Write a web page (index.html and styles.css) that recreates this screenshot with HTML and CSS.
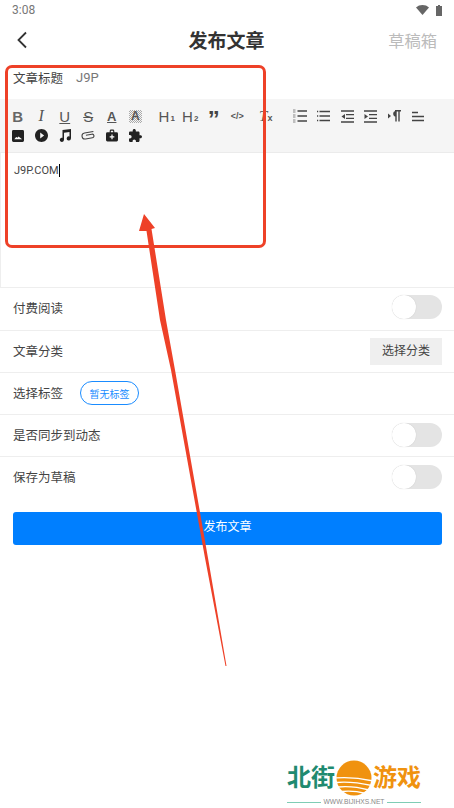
FILE: index.html
```html
<!DOCTYPE html>
<html lang="zh">
<head>
  <meta charset="UTF-8">
  <meta name="viewport" content="width=device-width, initial-scale=1.0">
  <title>发布文章</title>
  <link rel="stylesheet" href="styles.css">
</head>
<body>
  <div class="page">
    <!-- Status bar -->
    <div class="status-bar">
      <span>3:08</span>
      <div class="status-icons">
        <svg width="13" height="10" viewBox="0 0 13 10"><path d="M0 2.500C3.500-.8 9.500-.8 13 2.500L6.500 10z" fill="#666"/></svg>
        <svg width="6" height="11" viewBox="0 0 6 11"><path d="M2 0h2v1h2v10H0V1h2z" fill="#666"/></svg>
      </div>
    </div>

    <!-- Header -->
    <div class="header">
      <svg class="back" width="12" height="18" viewBox="0 0 12 18"><path d="M10 1.500L2.500 9l7.500 7.500" fill="none" stroke="#333" stroke-width="1.800"/></svg>
      <h1>发布文章</h1>
      <span class="drafts">草稿箱</span>
    </div>

    <div class="title-row">
      <span>文章标题</span>
      <span class="title-value">J9P</span>
    </div>

    <!-- Editor toolbar -->
    <div class="toolbar">
      <div class="tool-group">
        <span class="tool t-bold">B</span>
        <span class="tool t-italic">I</span>
        <span class="tool t-under">U</span>
        <span class="tool t-strike">S</span>
        <span class="tool t-color">A</span>
        <span class="tool"><span class="t-back">A</span></span>
      </div>
      <div class="tool-group">
        <span class="tool t-head">H<sub>1</sub></span>
        <span class="tool t-head">H<sub>2</sub></span>
        <span class="tool t-quote">”</span>
        <span class="tool t-code">&lt;/&gt;</span>
      </div>
      <div class="tool-group t-clear-group">
        <span class="tool t-clear">T<sub>x</sub></span>
      </div>
      <div class="tool-group">
        <span class="tool"><svg width="14" height="14" viewBox="0 0 14 14"><path d="M4.500 2h9.500M4.500 7h9.500M4.500 12h9.500" stroke="#444" stroke-width="1.300"/><path d="M0 1h2.500M0 3h2.500M0 6h2.500M0 8h2.500M0 11h2.500M0 13h2.500" stroke="#888"/></svg></span>
        <span class="tool"><svg width="13" height="12" viewBox="0 0 13 12"><path d="M2.500 1.500H13M2.500 6H13M2.500 10.500H13M0 1.500h1.200M0 6h1.200M0 10.500h1.200" stroke="#444" stroke-width="1.300"/></svg></span>
        <span class="tool"><svg width="13" height="13" viewBox="0 0 13 13"><path d="M0 1h13M5 4.700h8M5 8.300h8M0 12h13" stroke="#444" stroke-width="1.300"/><path d="M4 4v5L.5 6.500z" fill="#444"/></svg></span>
        <span class="tool"><svg width="13" height="13" viewBox="0 0 13 13"><path d="M0 1h13M5 4.700h8M5 8.300h8M0 12h13" stroke="#444" stroke-width="1.300"/><path d="M.5 4v5L4 6.500z" fill="#444"/></svg></span>
        <span class="tool"><svg width="13" height="12" viewBox="0 0 13 12"><path d="M0 3.500v5L3 6z" fill="#444"/><path d="M8 1a2.800 2.800 0 0 0 0 5.600z" fill="#444"/><path d="M8 1v10.500M11 1v10.500M7 .8h6" stroke="#444" stroke-width="1.400"/></svg></span>
        <span class="tool"><svg width="12" height="11" viewBox="0 0 12 11"><path d="M0 1.500h6M0 5.500h12M0 9.500h12" stroke="#444" stroke-width="1.300"/></svg></span>
      </div>
      <div class="tool-group">
        <span class="tool"><svg width="12" height="12" viewBox="0 0 13 13"><path d="M1.500 0h10A1.500 1.500 0 0 1 13 1.500v10a1.500 1.500 0 0 1-1.500 1.500h-10A1.500 1.500 0 0 1 0 11.500v-10A1.500 1.500 0 0 1 1.500 0z" fill="#222"/><path d="M2.500 10l2-2.500 1.500 1 1-1.500 1.500 1 2.500 2z" fill="#fff"/></svg></span>
        <span class="tool"><svg width="13" height="13" viewBox="2 2 20 20"><path d="M12 2C6.480 2 2 6.480 2 12s4.480 10 10 10 10-4.480 10-10S17.520 2 12 2zm-2 14.500v-9l6 4.500-6 4.500z" fill="#222"/></svg></span>
        <span class="tool"><svg width="12" height="13" viewBox="0 0 12 13"><path d="M3.500 1L12 0v9.500h-.1a2.100 2.100 0 1 1-1.400-2V3L5 3.700v7.100a2.100 2.100 0 1 1-1.500-2z" fill="#222"/></svg></span>
        <span class="tool"><svg width="14" height="9" viewBox="0 0 14 9"><g transform="rotate(-10 7 4.500)"><path d="M13 1.500H4a3 3 0 0 0 0 6h7a1.800 1.800 0 0 0 0-3.600H5" fill="none" stroke="#444" stroke-width="1.100"/></g></svg></span>
        <span class="tool"><svg width="12" height="13" viewBox="0 0 13 13"><path d="M4 3V1.500A1.500 1.500 0 0 1 5.500 0h2A1.500 1.500 0 0 1 9 1.500V3h2.500A1.500 1.500 0 0 1 13 4.500v7a1.500 1.500 0 0 1-1.500 1.500h-10A1.500 1.500 0 0 1 0 11.500v-7A1.500 1.500 0 0 1 1.500 3zm1.200 0h2.600V1.300H5.200z" fill="#222" fill-rule="evenodd"/><path d="M6.500 5.500v5M4 8h5" stroke="#fff" stroke-width="1.300"/></svg></span>
        <span class="tool"><svg width="13" height="13" viewBox="2 1 21 21"><path d="M20.500 11H19V7c0-1.100-.9-2-2-2h-4V3.500C13 2.120 11.880 1 10.500 1S8 2.120 8 3.500V5H4c-1.100 0-1.990.9-1.990 2v3.800H3.500c1.490 0 2.700 1.210 2.700 2.700s-1.210 2.700-2.700 2.700H2V20c0 1.100.9 2 2 2h3.800v-1.500c0-1.490 1.210-2.700 2.700-2.700 1.490 0 2.700 1.210 2.700 2.700V22H17c1.100 0 2-.9 2-2v-4h1.500c1.380 0 2.500-1.120 2.500-2.500S21.880 11 20.500 11z" fill="#222"/></svg></span>
      </div>
    </div>

    <div class="editor">
      <span class="editor-text">J9P.COM</span>
    </div>

    <!-- Settings rows -->
    <div class="row row-first">
      <span class="label">付费阅读</span>
      <div class="switch"><div class="knob"></div></div>
    </div>
    <div class="row">
      <span class="label">文章分类</span>
      <div class="pick-btn">选择分类</div>
    </div>
    <div class="row row-start">
      <span class="label">选择标签</span>
      <div class="chip">暂无标签</div>
    </div>
    <div class="row">
      <span class="label">是否同步到动态</span>
      <div class="switch"><div class="knob"></div></div>
    </div>
    <div class="row">
      <span class="label">保存为草稿</span>
      <div class="switch"><div class="knob"></div></div>
    </div>

    <div class="submit">发布文章</div>

    <!-- Annotation drawn over the screenshot -->
    <div class="mark-box"></div>
    <svg class="mark-arrow" width="454" height="808" viewBox="0 0 454 808">
      <path d="M144 214L155 228 151.500 229 166 320 175 370 208 558 226.500 666 225.500 666 205 558 171 370 160 320 146.500 231 139 231z" fill="#ee4128"/>
    </svg>

    <!-- Watermark -->
    <div class="watermark">
      <div class="wm-main">
        <span class="wm-green">北街</span>
        <svg width="36" height="36" viewBox="0 0 36 36">
          <circle cx="18" cy="18" r="17.500" fill="#f0920f"/>
          <path d="M-1 18c12-1 25 0 38 3M0 22.500c10-1 22 0 36 3M2 27c10-1 20 0 31 3M6 31.500c8-1 16 0 24 2" fill="none" stroke="#fff" stroke-width="1.400"/>
        </svg>
        <span class="wm-orange">游戏</span>
      </div>
      <div class="wm-sub">
        <i></i><span>WWW.BIJIHXS.NET</span><i></i>
      </div>
    </div>
  </div>
</body>
</html>
```

FILE: styles.css
```css
/* General Styles */
body {
  margin: 0;
  background: #fff;
  font-family: "Roboto", "Noto Sans CJK SC", sans-serif;
  color: #444;
}

.page {
  position: relative;
  width: 454px;
  height: 808px;
  overflow: hidden;
  font-size: 12.500px;
}

/* Status bar */
.status-bar {
  display: flex;
  justify-content: space-between;
  align-items: center;
  height: 20px;
  padding: 0 12px;
  font-size: 12px;
  color: #777;
}

.status-icons {
  display: flex;
  align-items: center;
  gap: 7px;
}

/* Header */
.header {
  display: grid;
  grid-template-columns: 1fr auto 1fr;
  align-items: center;
  box-sizing: border-box;
  height: 42px;
  padding: 0 17px 2px 16px;
}

.header h1 {
  margin: 0 0 2px;
  font-size: 19px;
  font-weight: 700;
  color: #333;
}

.drafts {
  justify-self: end;
  font-size: 16.300px;
  color: #bbb;
}

/* Title row */
.title-row {
  display: flex;
  gap: 13px;
  align-items: center;
  height: 37px;
  padding: 0 13px 7px;
  box-sizing: border-box;
}

.title-value {
  color: #777;
  font-size: 13px;
}

/* Toolbar */
.toolbar {
  display: flex;
  flex-wrap: wrap;
  align-content: flex-start;
  box-sizing: border-box;
  height: 54px;
  padding: 7.500px 0 0 6px;
  background: #f5f5f5;
  border-bottom: 1px solid #ebebeb;
}

.tool-group {
  display: flex;
  margin-right: 8px;
}

.t-clear-group {
  margin-left: -3px;
  margin-right: 11px;
}

.tool {
  display: flex;
  align-items: center;
  justify-content: center;
  width: 23.500px;
  height: 19.500px;
  font-family: "Liberation Sans", sans-serif;
  font-size: 15px;
  color: #555;
}

.tool sub {
  font-size: 8px;
  font-weight: 700;
  line-height: 1;
  align-self: flex-end;
  margin: 0 0 3px 1px;
  vertical-align: baseline;
}

.t-bold { font-size: 15px; font-weight: 700; color: #666; }
.t-italic { font-family: "Liberation Serif", serif; font-style: italic; font-size: 16px; }
.t-under { font-size: 15px; text-decoration: underline; }
.t-strike { font-size: 15px; text-decoration: line-through; }
.t-color { font-size: 13px; font-weight: 700; text-decoration: underline; }

.t-back {
  width: 13px;
  height: 13px;
  line-height: 13px;
  text-align: center;
  font-size: 12px;
  font-weight: 700;
  background: repeating-conic-gradient(#aaa 0 25%, #f5f5f5 0 50%) 0 0 / 2px 2px;
}

.t-head { font-size: 15px; }
.t-quote { font-size: 24px; font-weight: 700; padding-top: 8px; box-sizing: border-box; color: #444; }
.t-code { font-size: 9px; font-weight: 700; }
.t-clear { font-family: "Liberation Serif", serif; font-style: italic; font-size: 15px; }
.t-clear sub { font-family: "Liberation Sans", sans-serif; font-style: normal; font-size: 9px; margin: 0 0 3px 0; }

/* Editor */
.editor {
  box-sizing: border-box;
  height: 134px;
  padding: 11px 13px;
  border-left: 1px solid #eee;
  font-size: 11px;
  line-height: 13px;
  color: #444;
}

.editor-text {
  border-right: 1px solid #000;
  display: inline-block;
}

/* Rows */
.row {
  display: flex;
  align-items: center;
  justify-content: space-between;
  box-sizing: border-box;
  height: 42px;
  padding: 0 12px 1px 13px;
  border-top: 1px solid #eee;
}

.label {
  margin-bottom: 2px;
}

.row-first {
  height: 43px;
  padding-bottom: 2px;
}

.row-first .switch {
  margin-bottom: 2px;
}

.row:last-of-type {
  border-bottom: 1px solid #eee;
  height: 43px;
}

.row-start {
  justify-content: flex-start;
  gap: 17px;
}

.switch {
  display: flex;
  width: 50px;
  height: 24px;
  border-radius: 12px;
  background: #e4e4e4;
}

.knob {
  width: 24px;
  height: 24px;
  border-radius: 50%;
  background: #fff;
  box-shadow: 0 0 1px rgba(0, 0, 0, 0.2);
}

.pick-btn {
  width: 72px;
  height: 27px;
  line-height: 27px;
  text-align: center;
  background: #efefef;
  font-size: 12px;
}

.chip {
  display: flex;
  align-items: center;
  justify-content: center;
  box-sizing: border-box;
  width: 59px;
  height: 24px;
  border: 1px solid #1a8cff;
  border-radius: 12px;
  color: #1a8cff;
  font-size: 10px;
}

/* Submit button */
.submit {
  margin: 14px 12px 0 13px;
  height: 33px;
  line-height: 31px;
  text-align: center;
  border-radius: 3px;
  background: #007fff;
  color: #fff;
  font-size: 12px;
}

/* Annotation */
.mark-box {
  position: absolute;
  left: 5px;
  top: 65px;
  width: 261px;
  height: 183px;
  box-sizing: border-box;
  border: 3px solid #ee4128;
  border-radius: 7px;
}

.mark-arrow {
  position: absolute;
  left: 0;
  top: 0;
}

/* Watermark */
.watermark {
  position: absolute;
  left: 287px;
  top: 760px;
  width: 134px;
}

.wm-main {
  display: flex;
  align-items: center;
  justify-content: space-between;
  height: 36px;
  font-size: 24px;
  font-weight: 700;
  line-height: 36px;
  white-space: nowrap;
}

.wm-main svg {
  flex: none;
  margin: 0 1px;
}

.wm-green { color: #1f8a70; }
.wm-orange { color: #f0920f; }

.wm-sub {
  display: flex;
  align-items: center;
  gap: 3px;
  margin-top: 2px;
  font-family: "Liberation Sans", sans-serif;
  font-size: 6.700px;
  line-height: 8px;
  color: #888;
  white-space: nowrap;
}

.wm-sub i {
  flex: 1;
  height: 1px;
  background: #7fcdb5;
}
```
